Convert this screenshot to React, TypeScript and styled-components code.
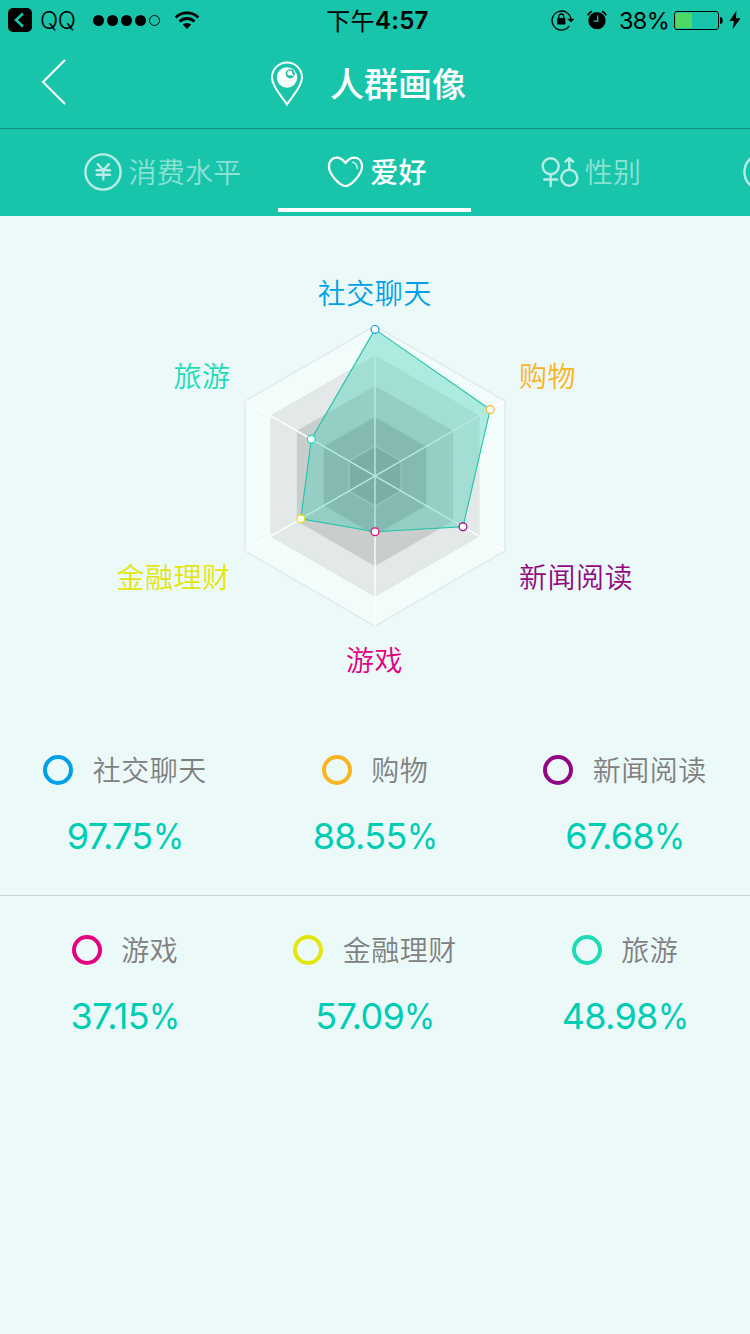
import React from 'react';
import styled, { createGlobalStyle } from 'styled-components';

const CJK = '"Noto Sans CJK SC", sans-serif';

const GlobalStyle = createGlobalStyle`
  *, *::before, *::after { box-sizing: border-box; }
  body { margin: 0; background: #ebf9f8; }
`;

const Screen = styled.main`
  width: 750px;
  height: 1334px;
  overflow: hidden;
  display: flex;
  flex-direction: column;
  background: #ebf9f8;
  font-family: Inter, ${CJK};
`;

const StatusBar = styled.div`
  height: 40px;
  display: grid;
  grid-template-columns: 1fr auto 1fr;
  align-items: center;
  padding: 0 9px 0 8px;
  background: #18c5aa;
  color: #000;
  font-size: 24px;
  line-height: 40px;
`;

const StatusGroup = styled.div<{ $end?: boolean }>`
  display: flex;
  align-items: center;
  height: 40px;
  justify-content: ${(p) => (p.$end ? 'flex-end' : 'flex-start')};
`;

const Carrier = styled.span`
  width: 36px;
  margin: 0 17px 0 8px;
  padding-top: 1px;
  font-size: 24px;
  font-weight: 350;
  letter-spacing: -0.4px;
`;

const Signal = styled.svg`
  margin-right: 13px;
`;

const Clock = styled.time`
  height: 40px;
  padding-top: 1px;
  font-size: 24px;
  font-weight: 600;
  letter-spacing: 0.3px;
  display: flex;
  margin-left: 6px;
`;

const Meridiem = styled.span`
  font-family: ${CJK};
  font-weight: 400;
  line-height: 38px;
`;

const Percent = styled.span`
  width: 49px;
  margin: 0 6px 0 12px;
  padding-top: 1px;
  font-size: 23.5px;
  letter-spacing: -0.7px;
`;

const AlarmIcon = styled.svg`
  margin-left: 12px;
`;

const BoltIcon = styled.svg`
  margin-left: 6px;
`;

const NavBar = styled.header`
  height: 89px;
  display: grid;
  grid-template-columns: 80px 1fr 80px;
  align-items: center;
  background: #18c5aa;
  border-bottom: 1px solid #118e7b;
`;

const BackButton = styled.button`
  height: 88px;
  padding: 0 0 4px 40px;
  border: 0;
  background: none;
  display: flex;
  align-items: center;
`;

const Title = styled.h1`
  margin: 0;
  display: flex;
  align-items: center;
  justify-content: center;
  gap: 26px;
  padding-right: 14px;
  height: 88px;
  color: #fff;
  font: 500 34px/86px ${CJK};
`;

const TitleText = styled.span`
  height: 88px;
`;

const TabBar = styled.nav`
  position: relative;
  height: 87px;
  display: flex;
  padding-left: 56px;
  overflow: hidden;
  background: #18c5aa;
`;

const Tab = styled.div<{ $active?: boolean; $gap: number }>`
  flex: 0 0 214px;
  height: 86px;
  display: flex;
  align-items: center;
  justify-content: center;
  gap: ${(p) => p.$gap}px;
  color: ${(p) => (p.$active ? '#fff' : 'rgba(255,255,255,0.5)')};
  font: ${(p) => (p.$active ? 500 : 350)} 28px/84px ${CJK};
  letter-spacing: 0.3px;
`;

const PartialTab = styled(Tab)`
  justify-content: flex-start;
  padding-left: 45px;
`;

const TabText = styled.span`
  height: 86px;
`;

const TabIcon = styled.svg<{ $active?: boolean }>`
  fill: none;
  stroke: ${(p) => (p.$active ? '#fff' : '#baede5')};
  stroke-linecap: round;
  stroke-linejoin: round;
`;

const Indicator = styled.div`
  position: absolute;
  left: 278px;
  bottom: 4px;
  width: 193px;
  height: 4px;
  background: #fff;
`;

const ChartPanel = styled.section`
  height: 500px;
`;

const AxisLabel = styled.text`
  font: 350 28px ${CJK};
  letter-spacing: 0.5px;
`;

const StatRow = styled.section<{ $divided?: boolean }>`
  height: 180px;
  display: grid;
  grid-template-columns: repeat(3, 250px);
  border-bottom: ${(p) => (p.$divided ? '1px solid #c5d3d2' : '0')};
`;

const Stat = styled.div`
  display: flex;
  flex-direction: column;
  align-items: center;
  padding-top: 34px;
`;

const StatName = styled.div`
  height: 40px;
  display: flex;
  align-items: center;
  gap: 19.5px;
  color: #808080;
  font: 350 28px/38px ${CJK};
  letter-spacing: 0.5px;
`;

const StatLabel = styled.span`
  height: 40px;
`;

const Ring = styled.i<{ $color: string }>`
  width: 30px;
  height: 30px;
  border: 4px solid ${(p) => p.$color};
  border-radius: 50%;
`;

const StatValue = styled.div`
  margin-top: 26px;
  color: #00cdb4;
  font: 400 36px/40px Inter, sans-serif;
  letter-spacing: -0.7px;
`;

const PercentSign = styled.span`
  display: inline-block;
  transform: scaleX(0.88);
  transform-origin: left;
  margin-right: -4px;
`;

const CX = 375;
const CY = 260;
const hexagon = (r: number) =>
  [0, 1, 2, 3, 4, 5]
    .map((i) => {
      const a = (Math.PI / 3) * i;
      return `${(CX + r * Math.sin(a)).toFixed(2)},${(CY - r * Math.cos(a)).toFixed(2)}`;
    })
    .join(' ');

const rings = [
  { r: 150, fill: '#f2fcfb', stroke: '#dfe8e6' },
  { r: 120, fill: '#e2e9e8', stroke: '#e0e7e6' },
  { r: 89.5, fill: '#c9cecd', stroke: '#c9cfce' },
  { r: 59.5, fill: '#afadad', stroke: '#c0c8c6' },
  { r: 30, fill: '#a09a9c', stroke: '#c0c8c6' },
];

const stats = [
  { name: '社交聊天', value: '97.75', color: '#00a0e9', x: 375, y: 113.4, lx: 374.7, ly: 88, anchor: 'middle' },
  { name: '购物', value: '88.55', color: '#fbb321', x: 490.2, y: 193.5, lx: 519, ly: 171, anchor: 'start' },
  { name: '新闻阅读', value: '67.68', color: '#920783', x: 463, y: 310.8, lx: 519, ly: 372, anchor: 'start' },
  { name: '游戏', value: '37.15', color: '#e4007f', x: 375, y: 315.7, lx: 374.5, ly: 455, anchor: 'middle' },
  { name: '金融理财', value: '57.09', color: '#e3e60b', x: 300.8, y: 302.8, lx: 230.5, ly: 372, anchor: 'end' },
  { name: '旅游', value: '48.98', color: '#1bdcb5', x: 311.3, y: 223.3, lx: 230.5, ly: 171, anchor: 'end' },
] as const;

const Radar = () => (
  <svg width="750" height="500" viewBox="0 0 750 500">
    {rings.map((g) => (
      <polygon key={g.r} points={hexagon(g.r)} fill={g.fill} stroke={g.stroke} strokeWidth="1.3" />
    ))}
    <g stroke="#fff" strokeWidth="1.4">
      <path d="M375 110V410" strokeWidth="2" opacity="0.7" />
      <path d="M245.1 185L504.9 335M504.9 185L245.1 335" />
    </g>
    <polygon
      points={stats.map((s) => `${s.x},${s.y}`).join(' ')}
      fill="rgba(65,207,183,0.39)"
      stroke="#21c3aa"
      strokeWidth="1.1"
    />
    {stats.map((s) => (
      <g key={s.name}>
        <circle cx={s.x} cy={s.y} r="3.9" fill="#fff" stroke={s.color} strokeWidth="1.2" />
        <AxisLabel x={s.lx} y={s.ly} textAnchor={s.anchor} fill={s.color}>
          {s.name}
        </AxisLabel>
      </g>
    ))}
  </svg>
);

const StatBlock = ({ items, divided }: { items: readonly (typeof stats)[number][]; divided?: boolean }) => (
  <StatRow $divided={divided}>
    {items.map((s) => (
      <Stat key={s.name}>
        <StatName>
          <Ring $color={s.color} />
          <StatLabel>{s.name}</StatLabel>
        </StatName>
        <StatValue>
          {s.value}
          <PercentSign>%</PercentSign>
        </StatValue>
      </Stat>
    ))}
  </StatRow>
);

export default function App() {
  return (
    <Screen>
      <GlobalStyle />
      <StatusBar>
        <StatusGroup>
          <svg width="24" height="24" viewBox="0 0 24 24">
            <rect width="24" height="24" rx="5" />
            <path d="M15 5.5L8 12l7 6.5" fill="none" stroke="#18c5aa" strokeWidth="2.6" />
          </svg>
          <Carrier>QQ</Carrier>
          <Signal width="68" height="12" viewBox="0 0 68 12">
            {[5.5, 19.5, 33.5, 47.5].map((x) => (
              <circle key={x} cx={x} cy="6.5" r="5.5" />
            ))}
            <circle cx="61.5" cy="6.5" r="5" fill="none" stroke="#000" />
          </Signal>
          <svg width="26" height="18" viewBox="0 0 26 18" fill="none" stroke="#000" strokeWidth="2.8">
            <path d="M1.7 6.4a16.2 16.2 0 0 1 22.6 0" />
            <path d="M5.6 10.5a10.6 10.6 0 0 1 14.8 0" />
            <path d="M13 18L8.8 13.6a6 6 0 0 1 8.4 0z" fill="#000" stroke="none" />
          </svg>
        </StatusGroup>
        <Clock>
          <Meridiem>下午</Meridiem>4:57
        </Clock>
        <StatusGroup $end>
          <svg width="24" height="22" viewBox="0 0 24 22">
            <path d="M18.2 17.2A9.5 9.5 0 1 1 20 10.5" fill="none" stroke="#000" strokeWidth="1.3" />
            <path d="M16.2 9.7h7.3L19.9 13.5z" />
            <rect x="6.2" y="9" width="8.2" height="6.6" rx="0.8" />
            <path d="M7.9 9.5V7.4a2.4 2.4 0 0 1 4.8 0v2.1" fill="none" stroke="#000" strokeWidth="1.3" />
          </svg>
          <AlarmIcon width="20" height="20" viewBox="0 0 20 20">
            <circle cx="10" cy="10.6" r="8.7" />
            <path d="M.8 5.3A7 7 0 0 1 5 1.4M19.2 5.3A7 7 0 0 0 15 1.4" fill="none" stroke="#000" strokeWidth="1.8" />
            <path d="M10.7 5.6v5.6H6.5" fill="none" stroke="#18c5aa" strokeWidth="1.3" />
          </AlarmIcon>
          <Percent>38%</Percent>
          <svg width="49" height="20" viewBox="0 0 49 20">
            <rect x="0.5" y="1.5" width="44" height="18" rx="2.5" fill="none" stroke="#000" />
            <rect x="1.6" y="2.9" width="16.4" height="15.2" rx="1" fill="#4cd964" />
            <path d="M46 7.3h1.4q1.3 1 1.3 3.2t-1.3 3.2H46z" />
          </svg>
          <BoltIcon width="12" height="20" viewBox="0 0 12 20">
            <path d="M7.4 .8L.4 11H5L3.6 19.2 11.6 8.2H7z" />
          </BoltIcon>
        </StatusGroup>
      </StatusBar>

      <NavBar>
        <BackButton aria-label="返回">
          <svg width="28" height="46" viewBox="0 0 28 46">
            <path d="M24.5 1.5L3 23 24.5 44.5" fill="none" stroke="#fff" strokeWidth="2" strokeLinecap="round" />
          </svg>
        </BackButton>
        <Title>
          <svg width="34" height="46" viewBox="0 0 34 46">
            <path
              d="M17 43.5C13 37 2 26 2 16.5A15 15 0 0 1 32 16.5C32 26 21 37 17 43.5z"
              fill="none"
              stroke="#fff"
              strokeWidth="2"
            />
            <circle cx="17" cy="16.5" r="10.2" fill="#fff" />
            <circle cx="20.2" cy="12.8" r="4.6" fill="#18c5aa" />
            <circle cx="19.8" cy="12" r="2.5" fill="#fff" />
            <circle cx="22.6" cy="14" r="0.9" fill="#fff" />
          </svg>
          <TitleText>人群画像</TitleText>
        </Title>
      </NavBar>

      <TabBar>
        <Tab $gap={6}>
          <TabIcon width="38" height="38" viewBox="0 0 38 38" strokeWidth="2.4">
            <circle cx="19" cy="19" r="17.6" />
            <path d="M13.7 11.2L19.3 17l5.6-5.8M12.6 17.3H26M12.6 21.7H26M19.3 17v9.3" />
          </TabIcon>
          <TabText>消费水平</TabText>
        </Tab>
        <Tab $active $gap={7}>
          <TabIcon $active width="36" height="32" viewBox="0 0 36 32" strokeWidth="2.2">
            <path d="M18.5 7.2C15.3 2.6 12 1.7 9.5 1.7C5 1.7 1.9 5.4 1.9 10.2C1.9 18.5 13 30 18.5 30S35 18.5 35 10.2C35 5.4 32 1.7 27.5 1.7C25 1.7 21.7 2.6 18.5 7.2z" />
            <path d="M25.5 6.2c2.8.6 4.6 3 4.8 6.5" strokeWidth="1.3" opacity="0.8" />
          </TabIcon>
          <TabText>爱好</TabText>
        </Tab>
        <Tab $gap={6}>
          <TabIcon width="38" height="32" viewBox="0 0 38 32" strokeWidth="2.4">
            <circle cx="9.7" cy="10.2" r="8" />
            <path d="M9.7 18.2V30M3.2 23.5H16.2" />
            <circle cx="28.3" cy="21.7" r="8" />
            <path d="M28.3 13.7V2.2M24.5 5.7L28.3 2.2l3.8 3.5" />
          </TabIcon>
          <TabText>性别</TabText>
        </Tab>
        <PartialTab $gap={6}>
          <TabIcon width="38" height="38" viewBox="0 0 38 38" strokeWidth="2.4">
            <circle cx="19" cy="19" r="17.6" />
          </TabIcon>
        </PartialTab>
        <Indicator />
      </TabBar>

      <ChartPanel>
        <Radar />
      </ChartPanel>
      <StatBlock items={stats.slice(0, 3)} divided />
      <StatBlock items={stats.slice(3)} />
    </Screen>
  );
}
